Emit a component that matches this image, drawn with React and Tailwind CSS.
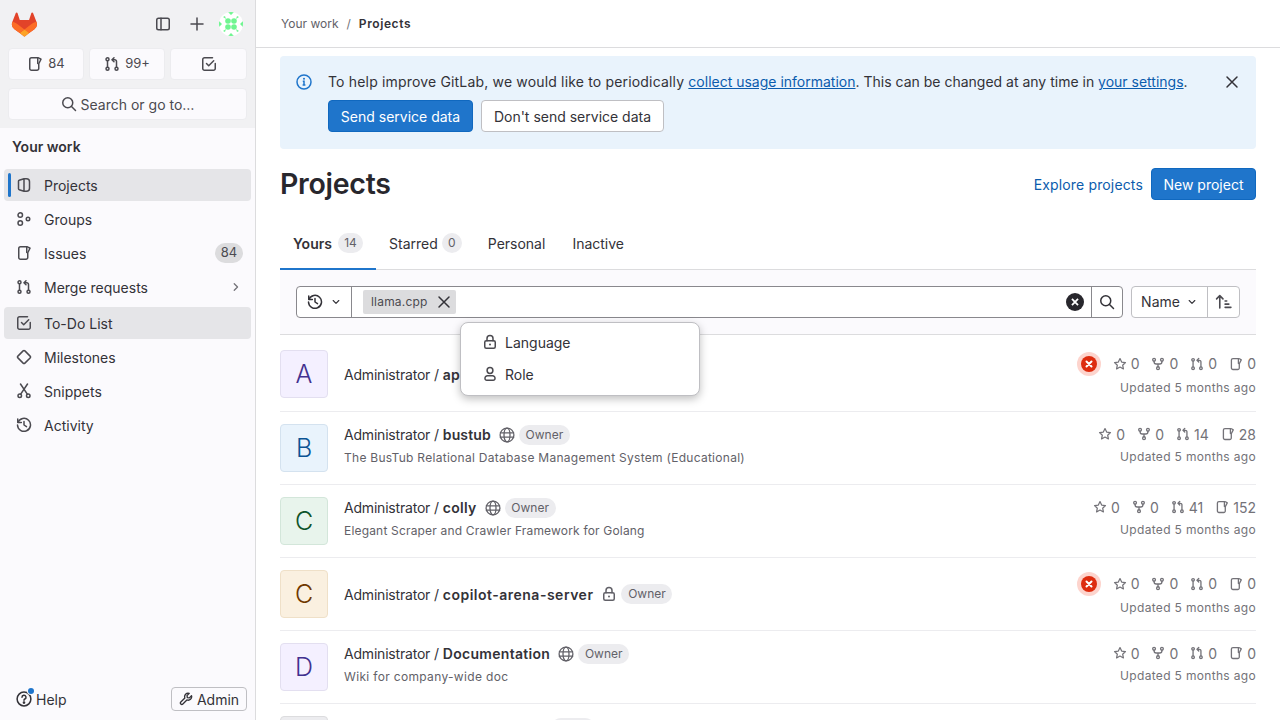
import React from "react";

const I = ({ children, s = 16, c = "" }) => (
  <svg width={s} height={s} viewBox="0 0 16 16" fill="none" stroke="currentColor" strokeWidth="1.5" strokeLinecap="round" strokeLinejoin="round" className={"shrink-0 " + c}>
    {children}
  </svg>
);

const IssueI2 = (p) => (<I {...p}><path d="M9.5 14.25h-5A1.75 1.75 0 0 1 2.75 12.5v-9A1.75 1.75 0 0 1 4.5 1.75h6.6c.4 0 .7.1 1 .3l1.9 1.2-2.25 4.5V12.5a1.75 1.75 0 0 1-1.75 1.75" /><path d="M10.75 2v5.5" /></I>);
const MrI = (p) => (<I {...p}><circle cx="3.5" cy="3.25" r="1.5" /><circle cx="3.5" cy="12.75" r="1.5" /><circle cx="12.5" cy="12.75" r="1.5" /><path d="M3.5 4.75v6.5M12.5 11.25V5.5a1.75 1.75 0 0 0-1.75-1.75H8.5" /><path d="M10 1.75l-2 2 2 2" /></I>);
const TodoI = (p) => (<I {...p}><path d="M14.25 7.5v5a1.75 1.75 0 0 1-1.75 1.75h-9a1.75 1.75 0 0 1-1.75-1.75v-9A1.75 1.75 0 0 1 3.5 1.75h8" /><path d="M5.5 7.5l2.2 2.2 5-5" /></I>);
const ProjectI = (p) => (<I {...p}><path d="M8 1.75 3.2 3.3a.9.9 0 0 0-.7.9v7.6c0 .4.3.8.7.9L8 14.25M8 1.75h2.5a3 3 0 0 1 3 3v6.5a3 3 0 0 1-3 3H8M8 1.75v12.5" /></I>);
const GroupI = (p) => (<I {...p}><circle cx="4.25" cy="4" r="2.25" /><circle cx="4.25" cy="12" r="2.25" /><circle cx="12" cy="8" r="1.75" /></I>);
const DiamondI = (p) => (<I {...p}><path d="M1.9 7.1 7.1 1.9a1.3 1.3 0 0 1 1.8 0l5.2 5.2a1.3 1.3 0 0 1 0 1.8l-5.2 5.2a1.3 1.3 0 0 1-1.8 0L1.9 8.9a1.3 1.3 0 0 1 0-1.8z" /></I>);
const ScissorI = (p) => (<I {...p}><circle cx="3.75" cy="12.75" r="1.75" /><circle cx="12.25" cy="12.75" r="1.75" /><path d="M4.7 11.2 11.5 1M11.3 11.2 4.5 1" /></I>);
const HistoryI = (p) => (<I {...p}><path d="M1.75 1.9v3.6h3.6" /><path d="M2 5.3A6.5 6.5 0 1 1 1.5 8" /><path d="M8 4.5V8l2.5 1.7" /></I>);
const SearchI = (p) => (<I {...p}><circle cx="6.75" cy="6.75" r="5" /><path d="M10.5 10.5l4 4" /></I>);
const StarI = (p) => (<I {...p}><path d="M8 1.8l1.9 4 4.35.55-3.2 3 .85 4.3L8 11.5l-3.9 2.15.85-4.3-3.2-3 4.35-.55z" strokeWidth="1.4" /></I>);
const ForkI = (p) => (<I {...p}><circle cx="3.5" cy="3.25" r="1.6" /><circle cx="12.5" cy="3.25" r="1.6" /><circle cx="8" cy="12.75" r="1.6" /><path d="M3.5 4.85V5.5A2.5 2.5 0 0 0 6 8h4a2.5 2.5 0 0 0 2.5-2.5v-.65M8 8v3.15" /></I>);
const GlobeI = (p) => (<I {...p}><circle cx="8" cy="8" r="6.9" strokeWidth="1.3" /><ellipse cx="8" cy="8" rx="3" ry="6.9" strokeWidth="1.3" /><path d="M1.3 5.8h13.4M1.3 10.2h13.4" strokeWidth="1.3" /></I>);
const LockI = (p) => (<I {...p}><rect x="2.75" y="6.75" width="10.5" height="7.5" rx="1.5" /><path d="M5 6.75V4.5a3 3 0 0 1 6 0v2.25" /><circle cx="8" cy="10.5" r="1" fill="currentColor" stroke="none" /></I>);
const UserI = (p) => (<I {...p}><circle cx="8" cy="4.5" r="2.9" /><path d="M3 12.2a2.4 2.4 0 0 1 2.4-2.45h5.2A2.4 2.4 0 0 1 13 12.2v.3a1.75 1.75 0 0 1-1.75 1.75h-6.5A1.75 1.75 0 0 1 3 12.5z" /></I>);
const CloseI = (p) => (<I {...p}><path d="M3 3l10 10M13 3 3 13" /></I>);
const ChevDown = (p) => (<I {...p}><path d="M4.25 6l3.75 3.75L11.75 6" /></I>);
const ChevRight = (p) => (<I {...p}><path d="M6 4.25 9.75 8 6 11.75" /></I>);
const ErrorI = () => (
  <svg width="16" height="16" viewBox="0 0 16 16" className="shrink-0">
    <circle cx="8" cy="8" r="8" fill="currentColor" />
    <path d="M5.5 5.5l5 5M10.5 5.5l-5 5" stroke="white" strokeWidth="2" strokeLinecap="round" />
  </svg>
);

const Logo = () => (
  <svg width="26" height="25" viewBox="0 0 25 24">
    <path d="m24.5 9.5-.03-.09L21.2.9a.85.85 0 0 0-1.62.09l-2.2 6.76H8.44L6.24.99A.85.85 0 0 0 4.62.9L1.34 9.41l-.03.09a6.07 6.07 0 0 0 2.01 7.01h.01l.03.03 4.98 3.73 2.47 1.87 1.5 1.13a1 1 0 0 0 1.22 0l1.5-1.13 2.47-1.87 5.01-3.75a6.07 6.07 0 0 0 2-7.02z" fill="#E24329" />
    <path d="m24.5 9.5-.03-.09a11 11 0 0 0-4.4 1.98l-7.16 5.42 4.56 3.45 5.01-3.75a6.07 6.07 0 0 0 2-7.01z" fill="#FC6D26" />
    <path d="m8.35 20.26 2.47 1.87 1.5 1.13a1 1 0 0 0 1.22 0l1.5-1.13 2.47-1.87-4.56-3.45z" fill="#FCA326" />
    <path d="M5.75 11.39a11 11 0 0 0-4.41-1.98l-.03.09a6.07 6.07 0 0 0 2.01 7.01h.01l.03.03 4.98 3.73 4.57-3.45z" fill="#FC6D26" />
  </svg>
);

const Avatar = () => (
  <div className="w-6 h-6 rounded-full bg-white overflow-hidden shrink-0 mr-1">
    <svg width="24" height="24" viewBox="0 0 24 24" fill="#6ff590">
      <circle cx="9" cy="9" r="2.8" /><circle cx="15" cy="9" r="2.8" /><circle cx="9" cy="15" r="2.8" /><circle cx="15" cy="15" r="2.8" />
      <path d="M9 0h6l-3 3zM9 24h6l-3-3zM0 9v6l3-3zM24 9v6l-3-3zM4 5l2-1 1 3zM20 5l-2-1-1 3zM4 19l2 1 1-3zM20 19l-2 1-1-3z" />
    </svg>
  </div>
);

const Nav = ({ icon, label, active, hl, right, mt }) => (
  <div className={"relative flex items-center h-8 rounded-[4px] pl-3 pr-2 text-[#333238] " + (mt || "mb-[2px] ") + (active || hl ? "bg-[#e5e5e8]" : "")}>
    {active && <span className="absolute left-1 top-1 bottom-1 w-[3px] rounded-full bg-[#1f75cb]" />}
    <span className="w-4 mr-3 flex text-[#4b4a50]">{icon}</span>
    <span className="flex-1 pt-[1px]">{label}</span>
    {right}
  </div>
);

const Stat = ({ icon, n }) => (
  <span className="flex items-center gap-[4px]">{icon}<span>{n}</span></span>
);

const tiles = {
  violet: "bg-[#f4f0ff] border-[#e3dff0] text-[#42318f]",
  blue: "bg-[#e9f3fc] border-[#d4e2ef] text-[#0b5394]",
  green: "bg-[#e8f4ec] border-[#d3e6da] text-[#0d532a]",
  orange: "bg-[#faf0e0] border-[#efe0c8] text-[#703800]",
  gray: "bg-[#ececef] border-[#dcdcde] text-[#333238]",
};

const Row = ({ letter, tone, name, vis, desc, stats, err, h = "h-[73px]", nameTrack = "tracking-[0.3px]", descTrack = "tracking-[0.28px]" }) => (
  <div className={"flex items-center border-b border-[#ececef] shrink-0 " + h}>
    <div className={"w-12 h-12 rounded-[4px] border flex items-center justify-center text-[25px] leading-none font-light mr-4 shrink-0 " + tiles[tone]}>{letter}</div>
    <div className={"flex-1 min-w-0 " + (desc ? "mb-[6px]" : "")}>
      <div className="flex items-center text-[14px] text-[#333238] h-5">
        <span className="tracking-[-0.2px]">Administrator / </span>
        <b className={"ml-[4px] font-semibold " + nameTrack}>{name}</b>
        {vis === "lock" ? <LockI c="ml-2 text-[#626168]" /> : <GlobeI c="ml-2 text-[#626168]" />}
        <span className="ml-1 h-5 w-[51px] rounded-full bg-[#ececef] text-[#626168] text-[12px] flex items-center justify-center">Owner</span>
      </div>
      {desc && <div className={"text-[12px] text-[#626168] mt-[5px] leading-4 " + descTrack}>{desc}</div>}
    </div>
    <div className={"flex flex-col items-end text-[#737278] pt-[1px] " + (desc ? "mb-[8px]" : "")}>
      <div className="flex items-center h-5 text-[14px] gap-[12px]">
        {err && (
          <span className="w-6 h-6 rounded-full bg-[#fdd4cd] text-[#dd2b0e] flex items-center justify-center">
            <ErrorI />
          </span>
        )}
        <Stat icon={<StarI s={14} />} n={stats[0]} />
        <Stat icon={<ForkI s={14} />} n={stats[1]} />
        <Stat icon={<MrI s={14} />} n={stats[2]} />
        <Stat icon={<IssueI2 s={14} />} n={stats[3]} />
      </div>
      <div className={"text-[12px] leading-4 tracking-[0.33px] " + (desc ? "mt-[5px]" : "mt-[6px]")}>Updated 5 months ago</div>
    </div>
  </div>
);

export default function App() {
  return (
    <div className="flex h-[720px] w-[1280px] overflow-hidden bg-white text-[14px] text-[#333238] [font-family:Inter,'Noto_Sans',sans-serif]">
      <aside className="w-[256px] shrink-0 flex flex-col bg-[#fbfafd] border-r border-[#dcdcde]">
        <div className="bg-[#f1f1f3] px-2 pb-2 h-[128px] shrink-0">
          <div className="flex items-center h-12">
            <span className="ml-[3px] flex"><Logo /></span>
            <span className="ml-auto mr-[18px] flex text-[#4b4a50]">
              <I><rect x="1.75" y="2.25" width="12.5" height="11.5" rx="1.75" /><path d="M6 2.25v11.5" /></I>
            </span>
            <span className="mr-[14px] flex text-[#4b4a50]"><I><path d="M8 2v12M2 8h12" /></I></span>
            <Avatar />
          </div>
          <div className="flex gap-[5px] text-[13px] text-[#4b4a50]">
            {[[<IssueI2 key="a" />, "84", "w-[76px]"], [<MrI key="b" />, "99+", "w-[76px]"], [<TodoI key="c" />, "", "w-[77px]"]].map(([ic, t, w], i) => (
              <div key={i} className={"h-8 rounded-[4px] bg-[#fbfafd] border border-[#ececef] flex items-center justify-center gap-[5px] " + w}>
                {ic}{t && <span>{t}</span>}
              </div>
            ))}
          </div>
          <div className="mt-2 h-8 rounded-[4px] bg-[#fbfafd] border border-[#ececef] flex items-center justify-center gap-[4px] text-[#4b4a50]">
            <SearchI /><span>Search or go to…</span>
          </div>
        </div>
        <div className="px-3 pt-[10px] pb-[13px] font-semibold text-[#333238] leading-[18px]">Your work</div>
        <div className="px-1 flex-1">
          <Nav active icon={<ProjectI />} label="Projects" />
          <Nav icon={<GroupI />} label="Groups" />
          <Nav icon={<IssueI2 />} label="Issues" right={<span className="h-5 w-7 rounded-full bg-[#dcdcde] text-[#4b4a50] text-[13px] flex items-center justify-center">84</span>} />
          <Nav icon={<MrI />} label="Merge requests" right={<ChevRight c="text-[#737278]" s={14} />} mt="mb-[4px] " />
          <Nav hl icon={<TodoI />} label="To-Do List" />
          <Nav icon={<DiamondI />} label="Milestones" />
          <Nav icon={<ScissorI />} label="Snippets" />
          <Nav icon={<HistoryI />} label="Activity" />
        </div>
        <div className="h-[48px] shrink-0 flex items-center justify-between pl-4 pr-2 pt-[6px]">
          <span className="relative flex items-center gap-[4px] text-[#333238]">
            <I><circle cx="8" cy="8" r="6.9" /><path d="M6 6.2a2 2 0 1 1 2.9 1.8c-.6.3-.9.7-.9 1.3" /><circle cx="8" cy="11.6" r=".6" fill="currentColor" /></I>
            <span>Help</span>
            <span className="absolute -top-[1px] left-[12px] w-[6px] h-[6px] rounded-full bg-[#1f75cb] ring-1 ring-[#fbfafd]" />
          </span>
          <span className="h-6 w-[76px] rounded-[4px] border border-[#bfbfc3] flex items-center justify-center gap-[4px] text-[#333238]">
            <I s={14}><path d="M14.3 4.2 11.8 6.7l-2.3-.3-.3-2.3 2.5-2.5a4 4 0 0 0-5 5.2l-4.6 4.6a1.6 1.6 0 0 0 2.3 2.3l4.6-4.6a4 4 0 0 0 5.3-4.9z" /></I>
            <span>Admin</span>
          </span>
        </div>
      </aside>

      <main className="flex-1 min-w-0 flex flex-col">
        <header className="h-12 shrink-0 border-b border-[#dcdcde] flex items-center pl-[25px] text-[12px] text-[#626168]">
          <span>Your work</span>
          <span className="mx-2 text-[#737278]">/</span>
          <b className="font-semibold text-[#333238] tracking-[0.6px]">Projects</b>
        </header>
        <div className="px-6 flex flex-col flex-1 min-h-0 relative">
          <div className="mt-2 h-[93px] shrink-0 rounded-[4px] bg-[#e9f3fc] relative pl-12 pt-[16px] text-[14px]">
            <span className="absolute left-4 top-[18px] text-[#1f75cb]">
              <svg width="16" height="16" viewBox="0 0 16 16" fill="none"><circle cx="8" cy="8" r="7" stroke="currentColor" strokeWidth="1.5" /><path d="M6.8 7.2H8v3.6M6.6 10.9h2.8" stroke="currentColor" strokeWidth="1.5" /><circle cx="8" cy="4.8" r="1" fill="currentColor" /></svg>
            </span>
            <div className="leading-5">
              <span className="tracking-[0.17px]">To help improve GitLab, we would like to periodically </span><span className="text-[#0b5cad] underline">collect usage information</span>. This can be changed at any time in <span className="text-[#0b5cad] underline">your settings</span>.
            </div>
            <div className="flex gap-2 mt-2">
              <span className="h-8 w-[145px] rounded-[4px] bg-[#1f75cb] border border-[#1068bf] text-white flex items-center justify-center">Send service data</span>
              <span className="h-8 w-[183px] rounded-[4px] bg-white border border-[#bfbfc3] text-[#333238] flex items-center justify-center">Don't send service data</span>
            </div>
            <span className="absolute right-4 top-[18px] text-[#333238]"><CloseI s={16} /></span>
          </div>

          <div className="flex items-center h-[70px] shrink-0">
            <h1 className="text-[28.5px] leading-9 font-semibold text-[#28272d] tracking-[-0.01em] flex-1">Projects</h1>
            <span className="text-[#0b5cad] mr-2 tracking-[0.15px]">Explore projects</span>
            <span className="h-8 w-[105px] rounded-[4px] bg-[#1f75cb] border border-[#1068bf] text-white flex items-center justify-center">New project</span>
          </div>

          <div className="flex h-[51px] shrink-0 border-b border-[#dcdcde] text-[#333238]">
            <div className="w-[96px] border-b-2 border-[#1f75cb] -mb-[1px] pl-[13px] flex items-center gap-[6px] pb-[1px]">
              <b className="font-semibold">Yours</b>
              <span className="h-5 w-[25px] rounded-full bg-[#ececef] text-[#626168] text-[12px] flex items-center justify-center">14</span>
            </div>
            <div className="ml-[13px] flex items-center gap-[4px] pb-[2px]">Starred
              <span className="h-5 w-5 rounded-full bg-[#ececef] text-[#626168] text-[12px] flex items-center justify-center">0</span>
            </div>
            <div className="ml-[26px] flex items-center pb-[2px]">Personal</div>
            <div className="ml-[27px] flex items-center pb-[2px]">Inactive</div>
          </div>

          <div className="h-[65px] shrink-0 bg-[#fbfafd] border-b border-[#dcdcde] flex items-center px-4 pb-[1px]">
            <div className="flex flex-1 h-8 rounded-[4px] border border-[#89888d] bg-white min-w-0">
              <div className="w-[55px] border-r border-[#89888d] flex items-center justify-center gap-[7px] text-[#333238] shrink-0">
                <HistoryI /><ChevDown s={12} />
              </div>
              <div className="flex-1 flex items-center pl-[11px]">
                <span className="h-6 w-[93px] rounded-[2px] bg-[#dcdcde] text-[12px] text-[#4b4a50] flex items-center pl-2">
                  <span className="tracking-[0.2px]">llama.cpp</span>
                  <CloseI s={16} c="ml-2 text-[#333238]" />
                </span>
              </div>
              <span className="flex items-center pr-[7px]">
                <svg width="18" height="18" viewBox="0 0 16 16"><circle cx="8" cy="8" r="8" fill="#28272d" /><path d="M5.3 5.3l5.4 5.4M10.7 5.3l-5.4 5.4" stroke="#fff" strokeWidth="1.6" /></svg>
              </span>
              <span className="w-[31px] border-l border-[#89888d] flex items-center justify-center text-[#333238]"><SearchI /></span>
            </div>
            <div className="ml-2 flex h-8 rounded-[4px] border border-[#bfbfc3] bg-white shrink-0">
              <span className="w-[76px] flex items-center justify-center gap-[6px] border-r border-[#bfbfc3]">Name <ChevDown s={12} /></span>
              <span className="w-[31px] flex items-center justify-center text-[#4b4a50]">
                <I s={17}><path d="M4.5 14V2.5M1.5 5.5l3-3 3 3" /><path d="M9.5 7.5h1.5M9.5 10.5h3.5M9.5 13.5h5.5" /></I>
              </span>
            </div>
          </div>

          <div className="flex-1 min-h-0 overflow-hidden flex flex-col">
            <Row letter="A" tone="violet" name="apache-demo-project" vis="globe" err h="h-[77px] pt-[2px]" stats={[0, 0, 0, 0]} />
            <Row letter="B" tone="blue" name="bustub" vis="globe" nameTrack="tracking-[0.15px]" desc="The BusTub Relational Database Management System (Educational)" stats={[0, 0, 14, 28]} />
            <Row letter="C" tone="green" name="colly" vis="globe" descTrack="tracking-[0.18px]" desc="Elegant Scraper and Crawler Framework for Golang" stats={[0, 0, 41, 152]} />
            <Row letter="C" tone="orange" name="copilot-arena-server" vis="lock" nameTrack="tracking-[0.5px]" err stats={[0, 0, 0, 0]} />
            <Row letter="D" tone="violet" name="Documentation" vis="globe" descTrack="tracking-[0.33px]" desc="Wiki for company-wide doc" stats={[0, 0, 0, 0]} />
            <div className="flex items-start h-[73px] shrink-0 pt-3">
              <div className="w-12 h-12 rounded-[4px] border bg-[#ececef] border-[#dcdcde] mr-4 shrink-0" />
              <div className="flex items-center h-5 mt-[2px] ml-[187px]">
                <GlobeI c="text-[#626168]" />
                <span className="ml-1 h-5 w-[44px] rounded-full bg-[#ececef]" />
              </div>
            </div>
          </div>

          <div className="absolute left-[204px] top-[274px] w-[240px] h-[74px] rounded-[8px] bg-white border border-[#bfbfc3] shadow-[0_3px_8px_rgba(0,0,0,0.25)] py-[3px]">
            <div className="h-8 flex items-center pl-[21px] gap-[7px] text-[#333238]"><LockI c="text-[#4b4a50]" /><span>Language</span></div>
            <div className="h-8 flex items-center pl-[21px] gap-[7px] text-[#333238]"><UserI c="text-[#4b4a50]" /><span>Role</span></div>
          </div>
        </div>
      </main>
    </div>
  );
}
